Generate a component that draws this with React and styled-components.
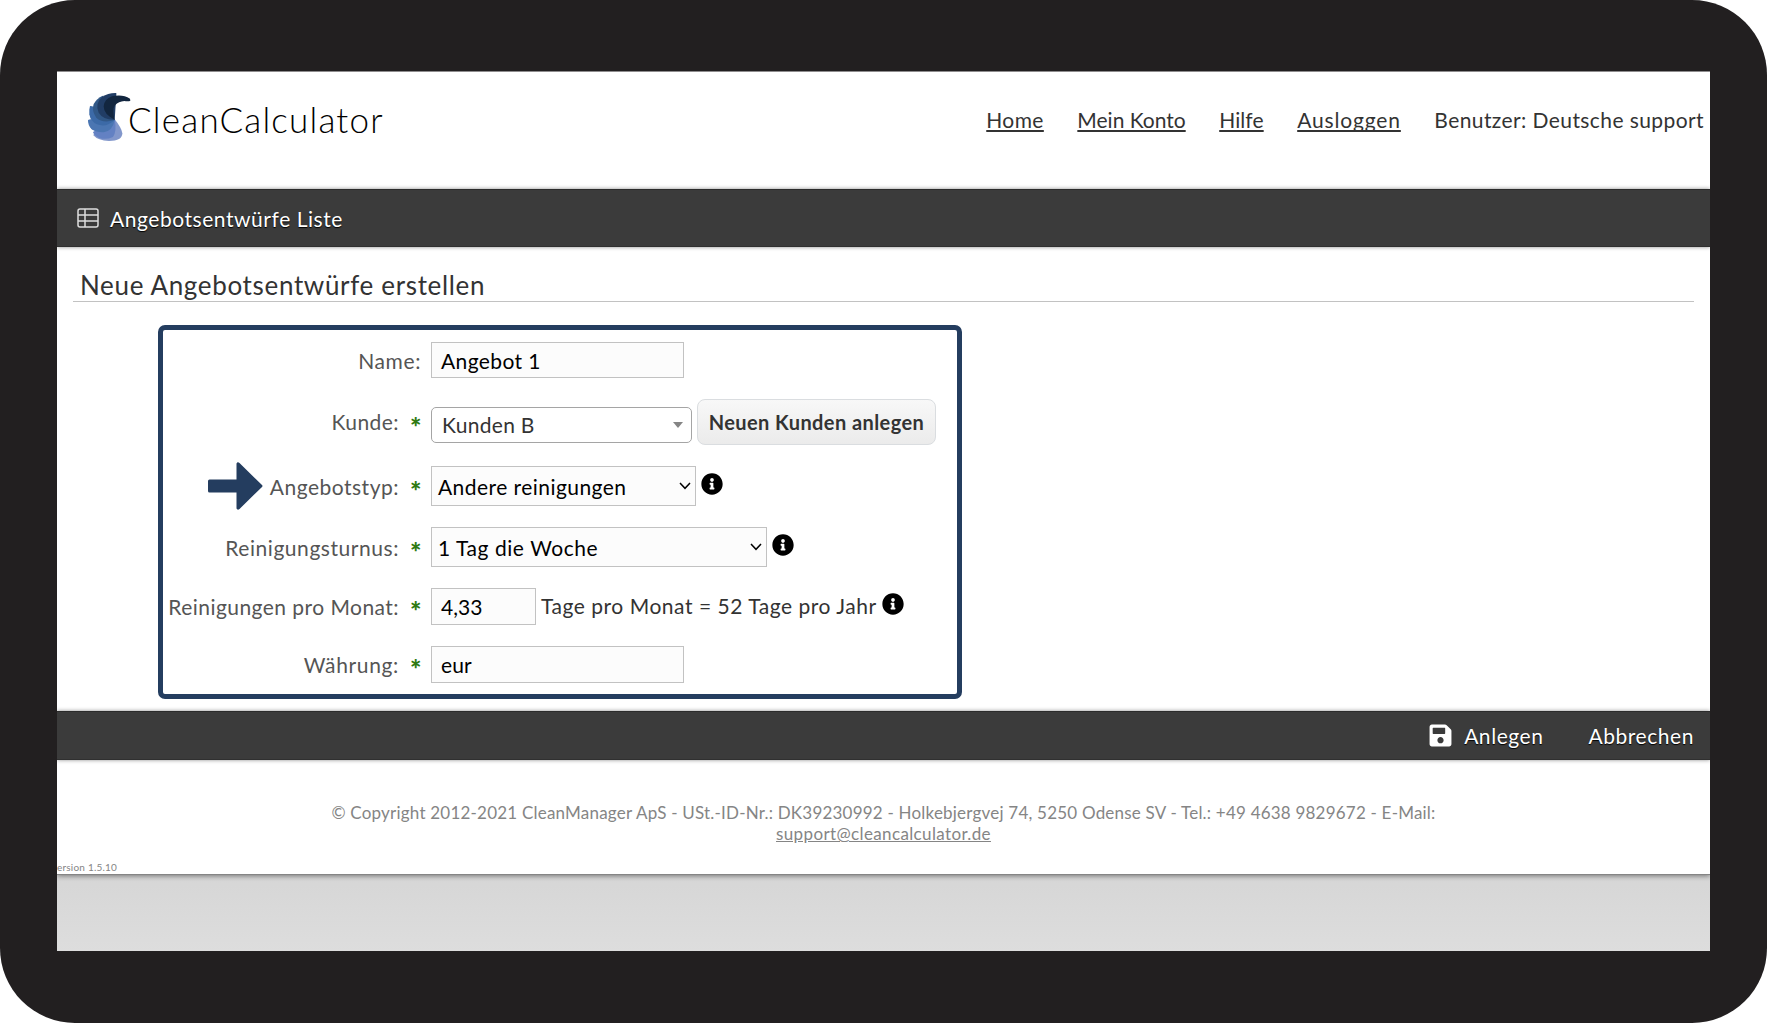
import styled, { createGlobalStyle } from "styled-components";
import { FaInfoCircle, FaSave } from "react-icons/fa";

const GlobalStyle = createGlobalStyle`
  * {
    box-sizing: border-box;
  }
  body {
    margin: 0;
    background: #fff;
    font-family: Lato, "Open Sans", sans-serif;
    font-size: 21px;
    color: #333;
  }
`;

const Device = styled.div`
  width: 1767px;
  height: 1023px;
  padding: 71px 57px 72px;
  border-radius: 75px;
  background: #221f20;
`;
const Screen = styled.div`
  height: 880px;
  overflow: hidden;
  background: linear-gradient(#d6d6d6 803px, #dddddd);
`;
const Page = styled.div`
  height: 804px;
  border-top: 1px solid #8f8d8e;
  border-bottom: 1px solid #858585;
  background: #fff;
  box-shadow: 0 1px 5px rgba(0, 0, 0, 0.45);
`;

const Header = styled.header`
  display: flex;
  justify-content: space-between;
  align-items: flex-start;
  height: 117px;
  padding: 20px 6px 0 30px;
`;
const Logo = styled.div`
  display: flex;
`;
const LogoText = styled.div`
  margin: 6px 0 0 -3px;
  font-size: 35px;
  line-height: 42px;
  font-weight: 300;
  letter-spacing: 1.2px;
  color: #000;
`;
const Nav = styled.nav`
  display: flex;
  gap: 33.5px;
  padding-top: 16px;
  line-height: 24px;
  white-space: nowrap;
`;
const NavLink = styled.a`
  letter-spacing: ${(p) => p.$spacing || 0}px;
  text-decoration: underline;
  text-decoration-thickness: 1.5px;
  text-underline-offset: 2px;
  text-decoration-skip-ink: none;
`;
const User = styled.span`
  letter-spacing: 0.41px;
`;

const Bar = styled.div`
  position: relative;
  display: flex;
  align-items: center;
  justify-content: ${(p) => (p.$end ? "flex-end" : "flex-start")};
  height: ${(p) => (p.$end ? 49 : 58)}px;
  padding: ${(p) => (p.$end ? "0 16px 1px 0" : "0 0 0 20px")};
  border-top: 1px solid #2b2b2b;
  border-bottom: 1px solid #303030;
  background: #3b3b3b;
  box-shadow: 0 0 4px rgba(0, 0, 0, 0.45);
  color: #fff;
  letter-spacing: 0.55px;
  text-shadow: 0 1px 1px #000;
`;
const BarItem = styled.div`
  display: flex;
  align-items: center;
  gap: 11px;
  margin-left: ${(p) => p.$left || 0}px;
`;

const Content = styled.main`
  height: 464px;
  padding: 21px 16px 0;
`;
const Title = styled.h1`
  margin: 0;
  padding: 1px 0 0 7px;
  border-bottom: 1px solid #c2c2c2;
  font-size: 26px;
  font-weight: 400;
  line-height: 32px;
  letter-spacing: 0.66px;
`;
const Form = styled.form`
  display: flex;
  flex-direction: column;
  gap: 21px;
  width: 804px;
  height: 374px;
  margin: 23px 0 0 85px;
  padding-top: 12px;
  border: 5px solid #243d5f;
  border-radius: 7px;
`;
const Row = styled.div`
  display: flex;
  align-items: center;
  height: ${(p) => p.$height}px;
`;
const Label = styled.label`
  display: flex;
  align-items: center;
  justify-content: flex-end;
  gap: 7px;
  width: ${(p) => (p.$wide ? 258 : 236)}px;
  margin-right: ${(p) => (p.$wide ? 10 : 11)}px;
  padding-bottom: ${(p) => p.$lift || 0}px;
  color: #555;
  letter-spacing: ${(p) => p.$spacing ?? 0.45}px;
  white-space: nowrap;
`;
const Star = styled.span`
  width: 21px;
  padding-top: 9px;
  font-size: 27px;
  line-height: 20px;
  font-weight: 900;
  color: #2f7a12;
`;
const Field = styled.div`
  display: flex;
  align-items: center;
  width: ${(p) => p.$width}px;
  height: 100%;
  padding: 0 5px 0 9px;
  padding-bottom: ${(p) => p.$lift || 0}px;
  border: 1px solid #c2c2c2;
  background: #fcfcfc;
  color: #000;
  letter-spacing: ${(p) => p.$spacing || 0}px;
`;
const Select = styled(Field)`
  justify-content: space-between;
  padding: 0 4px 0 6px;
`;
const Combo = styled(Field)`
  justify-content: space-between;
  height: 36px;
  margin-top: 5px;
  padding: 0 8px 0 10px;
  border-color: #a5a5a5;
  border-radius: 5px;
  background: #fff;
  color: #333;
`;
const Caret = styled.span`
  border: 5px solid transparent;
  border-top: 6px solid #858585;
  border-bottom: 0;
`;
const Button = styled.button`
  width: 239px;
  height: 46px;
  margin-left: 5px;
  padding: 0;
  border: 1px solid #dadde0;
  border-radius: 8px;
  background: linear-gradient(#f8f8f8, #ebebeb);
  font-family: inherit;
  font-size: 20px;
  font-weight: 700;
  letter-spacing: 0.42px;
  color: #333;
`;
const Hint = styled.span`
  margin-left: 5px;
  padding-bottom: 2px;
  letter-spacing: 0.53px;
`;
const Info = styled(FaInfoCircle)`
  width: 22px;
  height: 22px;
  margin: 0 0 ${(p) => p.$up || 4}px 5px;
  color: #000;
`;

const Footer = styled.footer`
  display: flex;
  flex-direction: column;
  align-items: center;
  height: 114px;
  padding-top: 42px;
  font-size: 17px;
  line-height: 21px;
  letter-spacing: 0.21px;
  color: #858585;
`;
const Mail = styled.a`
  letter-spacing: 0.37px;
  text-decoration: underline;
`;
const Version = styled.div`
  align-self: flex-start;
  margin-top: 17px;
  font-size: 10px;
  line-height: 12px;
`;

const LogoMark = () => (
  <svg width="44" height="50" viewBox="110 96 132 150">
    <path fill="#8297cb" d="M193 178Q214 204 216 220Q216 243 176 243Q143 242 129 226L134 215Z" />
    <path fill="#6381c3" d="M193 178Q200 214 188 231Q166 241 145 233Q129 224 128 216L134 212Q119 208 120 198Z" />
    <path fill="#4b76b2" d="M193 180Q187 213 160 217Q139 218 124 208Q112 195 113 180L120 178Z" />
    <path fill="#3c6aa7" d="M193 180Q168 204 140 193Q120 184 117 163Q116 148 119 138L126 139Z" />
    <path fill="#315887" d="M193 180Q157 191 138 173Q123 152 130 132Q139 115 157 107L161 112Z" />
    <path fill="#213d65" d="M193 179Q159 180 145 158Q133 130 155 111Q174 98 198 99L198 106Z" />
    <path fill="#12263f" d="M193 179Q160 163 160 139Q162 117 185 109Q216 101 239 116L240 122Q235 125 222 123Q205 124 194 136Q185 147 193 179Z" />
  </svg>
);

const TableIcon = () => (
  <svg width="22" height="20" viewBox="0 0 22 20" fill="none" stroke="#dedede" strokeWidth="1.5">
    <rect x="1" y="1" width="20" height="18" rx="2" />
    <path d="M8 1v18M1 7h20M1 13h20" />
  </svg>
);

const Chevron = () => (
  <svg width="12" height="8" viewBox="0 0 12 8" fill="none" stroke="#000" strokeWidth="1.5">
    <path d="M1 1l5 5.3L11 1" />
  </svg>
);

const Arrow = () => (
  <svg width="55" height="48" viewBox="0 0 55 48" fill="#243d5f">
    <path d="M1.5 17.5H28.5V1.5Q29.5-.5 31.5 1L54 23Q55 24 54 25L31.5 47Q29.5 48.5 28.5 46.5V30.5H1.5Q0 30.5 0 29V19Q0 17.5 1.5 17.5Z" />
  </svg>
);

export default function App() {
  return (
    <>
      <GlobalStyle />
      <Device>
        <Screen>
          <Page>
            <Header>
              <Logo>
                <LogoMark />
                <LogoText>CleanCalculator</LogoText>
              </Logo>
              <Nav>
                <NavLink $spacing={0.4}>Home</NavLink>
                <NavLink>Mein Konto</NavLink>
                <NavLink $spacing={0.1}>Hilfe</NavLink>
                <NavLink $spacing={0.85}>Ausloggen</NavLink>
                <User>Benutzer: Deutsche support</User>
              </Nav>
            </Header>
            <Bar>
              <BarItem>
                <TableIcon />
                Angebotsentwürfe Liste
              </BarItem>
            </Bar>
            <Content>
              <Title>Neue Angebotsentwürfe erstellen</Title>
              <Form>
                <Row $height={36}>
                  <Label $wide $spacing={0.6}>
                    Name:
                  </Label>
                  <Field $width={253} $spacing={0.4}>
                    Angebot 1
                  </Field>
                </Row>
                <Row $height={46}>
                  <Label $lift={2}>Kunde:</Label>
                  <Star>*</Star>
                  <Combo $width={261} $spacing={0.3}>
                    Kunden B
                    <Caret />
                  </Combo>
                  <Button type="button">Neuen Kunden anlegen</Button>
                </Row>
                <Row $height={40}>
                  <Label $spacing={0.5}>
                    <Arrow />
                    Angebotstyp:
                  </Label>
                  <Star>*</Star>
                  <Select $width={265} $spacing={0.45}>
                    Andere reinigungen
                    <Chevron />
                  </Select>
                  <Info />
                </Row>
                <Row $height={40}>
                  <Label $spacing={0.55}>Reinigungsturnus:</Label>
                  <Star>*</Star>
                  <Select $width={336} $spacing={0.55}>
                    1 Tag die Woche
                    <Chevron />
                  </Select>
                  <Info />
                </Row>
                <Row $height={37}>
                  <Label $lift={1}>Reinigungen pro Monat:</Label>
                  <Star>*</Star>
                  <Field $width={105} $lift={1}>
                    4,33
                  </Field>
                  <Hint>Tage pro Monat = 52 Tage pro Jahr</Hint>
                  <Info $up={6} />
                </Row>
                <Row $height={37}>
                  <Label $spacing={0.65}>Währung:</Label>
                  <Star>*</Star>
                  <Field $width={253} $spacing={0.1}>
                    eur
                  </Field>
                </Row>
              </Form>
            </Content>
            <Bar $end>
              <BarItem>
                <FaSave size={25} />
                Anlegen
              </BarItem>
              <BarItem $left={45}>Abbrechen</BarItem>
            </Bar>
            <Footer>
              <div>
                © Copyright 2012-2021 CleanManager ApS - USt.-ID-Nr.: DK39230992 - Holkebjergvej 74, 5250
                Odense SV - Tel.: +49 4638 9829672 - E-Mail:
              </div>
              <Mail>support@cleancalculator.de</Mail>
              <Version>ersion 1.5.10</Version>
            </Footer>
          </Page>
        </Screen>
      </Device>
    </>
  );
}
